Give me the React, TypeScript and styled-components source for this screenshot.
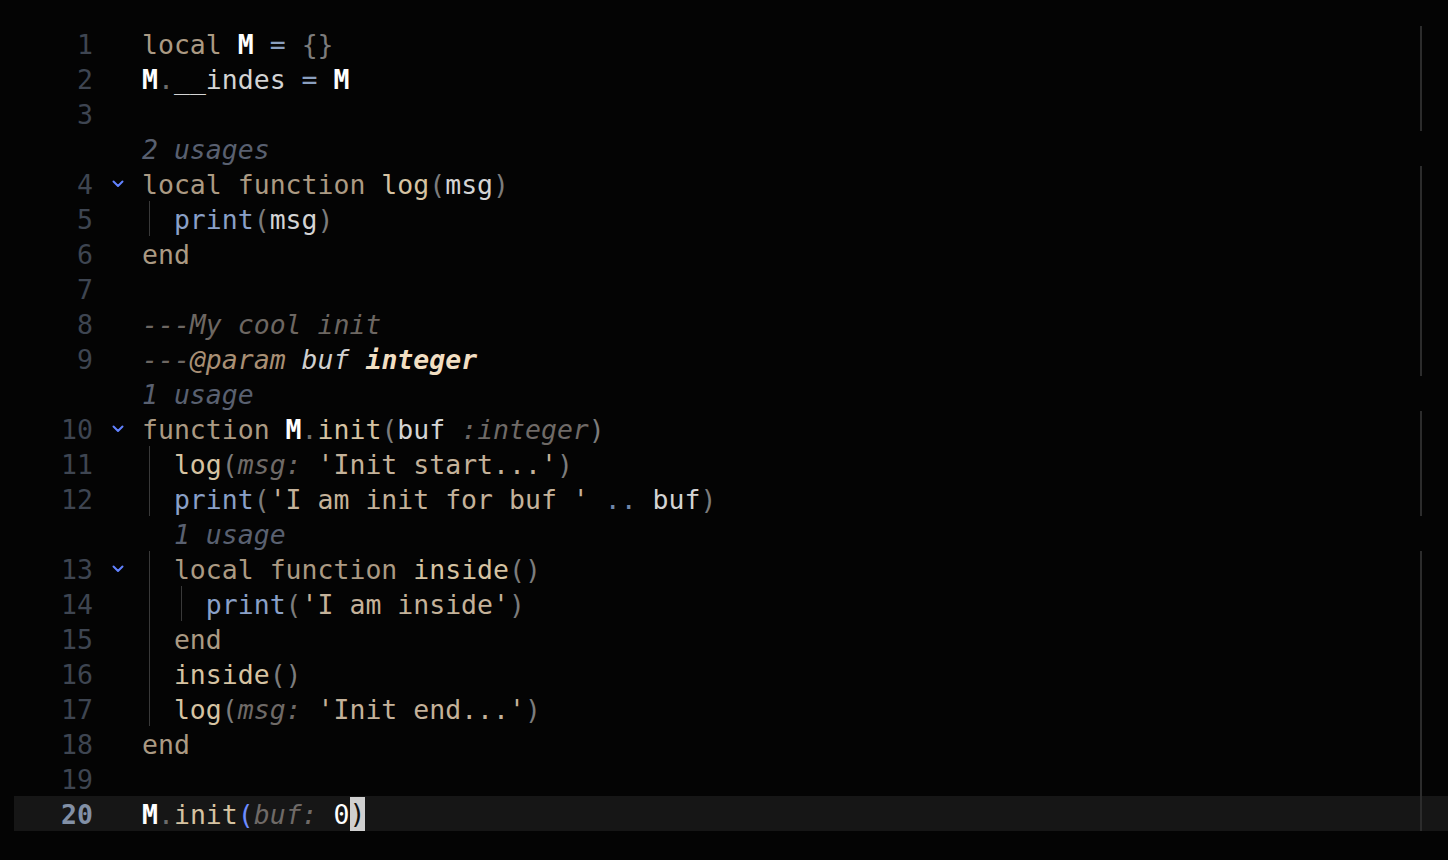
import React from "react";
import styled, { createGlobalStyle } from "styled-components";

const GlobalStyle = createGlobalStyle`
  html, body {
    margin: 0;
    padding: 0;
    background: #040404;
  }
  body {
    min-height: 100vh;
    font-family: "DejaVu Sans Mono", "Liberation Mono", monospace;
  }
`;

type Kind =
  | "kw"
  | "fn"
  | "ident"
  | "M"
  | "op"
  | "brace"
  | "dot"
  | "builtin"
  | "str"
  | "comment"
  | "tag"
  | "docparam"
  | "doctype"
  | "hint"
  | "concat"
  | "num"
  | "match"
  | "cursor"
  | "plain";

const colors: Record<Kind, string> = {
  kw: "#ab9a83",
  fn: "#d6c3a2",
  ident: "#d4d4d4",
  M: "#ffffff",
  op: "#8a9fbf",
  brace: "#7c7c7c",
  dot: "#6c6c6c",
  builtin: "#8aa0c8",
  str: "#c4b29a",
  comment: "#6d6762",
  tag: "#a88f74",
  docparam: "#d0d0d0",
  doctype: "#f2dfc3",
  hint: "#6f6a67",
  concat: "#6f87aa",
  num: "#ffffff",
  match: "#6d8cff",
  cursor: "#101010",
  plain: "#d4d4d4",
};

const italicKinds: Kind[] = ["comment", "tag", "docparam", "doctype", "hint"];
const boldKinds: Kind[] = ["M", "doctype"];

const Editor = styled.div`
  display: flex;
  flex-direction: column;
  padding: 26px 0 0 14px;
  font-family: "DejaVu Sans Mono", "Liberation Mono", monospace;
  font-size: 26.5px;
`;

const Row = styled.div<{ $current?: boolean }>`
  display: flex;
  align-items: stretch;
  height: 35px;
  background: ${(p) => (p.$current ? "#161616" : "transparent")};
`;

const LineNo = styled.div<{ $current?: boolean }>`
  flex: 0 0 79px;
  display: flex;
  align-items: center;
  justify-content: flex-end;
  padding-top: 1px;
  box-sizing: border-box;
  color: ${(p) => (p.$current ? "#8290a6" : "#3e4551")};
  font-weight: ${(p) => (p.$current ? 700 : 400)};
`;

const FoldCol = styled.div`
  flex: 0 0 49px;
  display: flex;
  align-items: center;
  padding-left: 19px;
  box-sizing: border-box;
`;

const Code = styled.div<{ $margin?: boolean }>`
  flex: 0 0 1280px;
  box-sizing: border-box;
  display: flex;
  align-items: stretch;
  white-space: pre;
  border-right: 2px solid ${(p) => (p.$margin ? "#2c2c2c" : "transparent")};
`;

const Indent = styled.span<{ $guide?: boolean }>`
  display: inline-block;
  width: 2ch;
  flex: 0 0 2ch;
  background: ${(p) =>
    p.$guide
      ? "linear-gradient(#393939, #393939) 7px 0 / 1px 100% no-repeat"
      : "none"};
`;

const Text = styled.span`
  display: flex;
  align-items: center;
  padding-top: 1px;
`;

const Token = styled.span<{ $kind: Kind }>`
  color: ${(p) => colors[p.$kind]};
  font-style: ${(p) => (italicKinds.includes(p.$kind) ? "italic" : "normal")};
  font-weight: ${(p) => (boldKinds.includes(p.$kind) ? 700 : 400)};
  background: ${(p) => (p.$kind === "cursor" ? "#cfcfcf" : "transparent")};
  line-height: ${(p) => (p.$kind === "cursor" ? "34px" : "normal")};
`;

const Inlay = styled.span`
  display: flex;
  align-items: center;
  padding-top: 1px;
  color: #596070;
  font-style: italic;
`;

const Chevron = () => (
  <svg width="12" height="8" viewBox="0 0 12 8">
    <polyline
      points="1.5,1.5 6,6 10.5,1.5"
      fill="none"
      stroke="#6282ff"
      strokeWidth="2"
      strokeLinecap="round"
      strokeLinejoin="round"
    />
  </svg>
);

type Tok = [string, Kind];

type Line =
  | { type: "code"; n: number; indent?: number; guides?: number; fold?: boolean; current?: boolean; toks: Tok[] }
  | { type: "inlay"; indent?: number; text: string };

const S: Tok = [" ", "plain"];

const lines: Line[] = [
  { type: "code", n: 1, toks: [["local", "kw"], S, ["M", "M"], S, ["=", "op"], S, ["{}", "brace"]] },
  { type: "code", n: 2, toks: [["M", "M"], [".", "dot"], ["__indes", "ident"], S, ["=", "op"], S, ["M", "M"]] },
  { type: "code", n: 3, toks: [] },
  { type: "inlay", text: "2 usages" },
  {
    type: "code",
    n: 4,
    fold: true,
    toks: [["local", "kw"], S, ["function", "kw"], S, ["log", "fn"], ["(", "brace"], ["msg", "ident"], [")", "brace"]],
  },
  {
    type: "code",
    n: 5,
    indent: 1,
    guides: 1,
    toks: [["print", "builtin"], ["(", "brace"], ["msg", "ident"], [")", "brace"]],
  },
  { type: "code", n: 6, toks: [["end", "kw"]] },
  { type: "code", n: 7, toks: [] },
  { type: "code", n: 8, toks: [["---My cool init", "comment"]] },
  {
    type: "code",
    n: 9,
    toks: [["---", "comment"], ["@param", "tag"], [" ", "comment"], ["buf", "docparam"], [" ", "comment"], ["integer", "doctype"]],
  },
  { type: "inlay", text: "1 usage" },
  {
    type: "code",
    n: 10,
    fold: true,
    toks: [
      ["function", "kw"],
      S,
      ["M", "M"],
      [".", "dot"],
      ["init", "fn"],
      ["(", "brace"],
      ["buf", "ident"],
      S,
      [":integer", "hint"],
      [")", "brace"],
    ],
  },
  {
    type: "code",
    n: 11,
    indent: 1,
    guides: 1,
    toks: [["log", "fn"], ["(", "brace"], ["msg:", "hint"], S, ["'Init start...'", "str"], [")", "brace"]],
  },
  {
    type: "code",
    n: 12,
    indent: 1,
    guides: 1,
    toks: [
      ["print", "builtin"],
      ["(", "brace"],
      ["'I am init for buf '", "str"],
      S,
      ["..", "concat"],
      S,
      ["buf", "ident"],
      [")", "brace"],
    ],
  },
  { type: "inlay", indent: 1, text: "1 usage" },
  {
    type: "code",
    n: 13,
    indent: 1,
    guides: 1,
    fold: true,
    toks: [["local", "kw"], S, ["function", "kw"], S, ["inside", "fn"], ["()", "brace"]],
  },
  {
    type: "code",
    n: 14,
    indent: 2,
    guides: 2,
    toks: [["print", "builtin"], ["(", "brace"], ["'I am inside'", "str"], [")", "brace"]],
  },
  { type: "code", n: 15, indent: 1, guides: 1, toks: [["end", "kw"]] },
  { type: "code", n: 16, indent: 1, guides: 1, toks: [["inside", "fn"], ["()", "brace"]] },
  {
    type: "code",
    n: 17,
    indent: 1,
    guides: 1,
    toks: [["log", "fn"], ["(", "brace"], ["msg:", "hint"], S, ["'Init end...'", "str"], [")", "brace"]],
  },
  { type: "code", n: 18, toks: [["end", "kw"]] },
  { type: "code", n: 19, toks: [] },
  {
    type: "code",
    n: 20,
    current: true,
    toks: [["M", "M"], [".", "dot"], ["init", "fn"], ["(", "match"], ["buf:", "hint"], S, ["0", "num"], [")", "cursor"]],
  },
];

export default function App() {
  return (
    <>
      <GlobalStyle />
      <Editor>
        {lines.map((line, i) => {
          if (line.type === "inlay") {
            return (
              <Row key={i}>
                <LineNo />
                <FoldCol />
                <Code>
                  {Array.from({ length: line.indent ?? 0 }).map((_, k) => (
                    <Indent key={k} />
                  ))}
                  <Inlay>{line.text}</Inlay>
                </Code>
              </Row>
            );
          }
          const indent = line.indent ?? 0;
          const guides = line.guides ?? 0;
          return (
            <Row key={i} $current={line.current}>
              <LineNo $current={line.current}>{line.n}</LineNo>
              <FoldCol>{line.fold ? <Chevron /> : null}</FoldCol>
              <Code $margin>
                {Array.from({ length: indent }).map((_, k) => (
                  <Indent key={k} $guide={k < guides} />
                ))}
                <Text>
                  {line.toks.map(([t, k], j) => (
                    <Token key={j} $kind={k}>
                      {t}
                    </Token>
                  ))}
                </Text>
              </Code>
            </Row>
          );
        })}
      </Editor>
    </>
  );
}
